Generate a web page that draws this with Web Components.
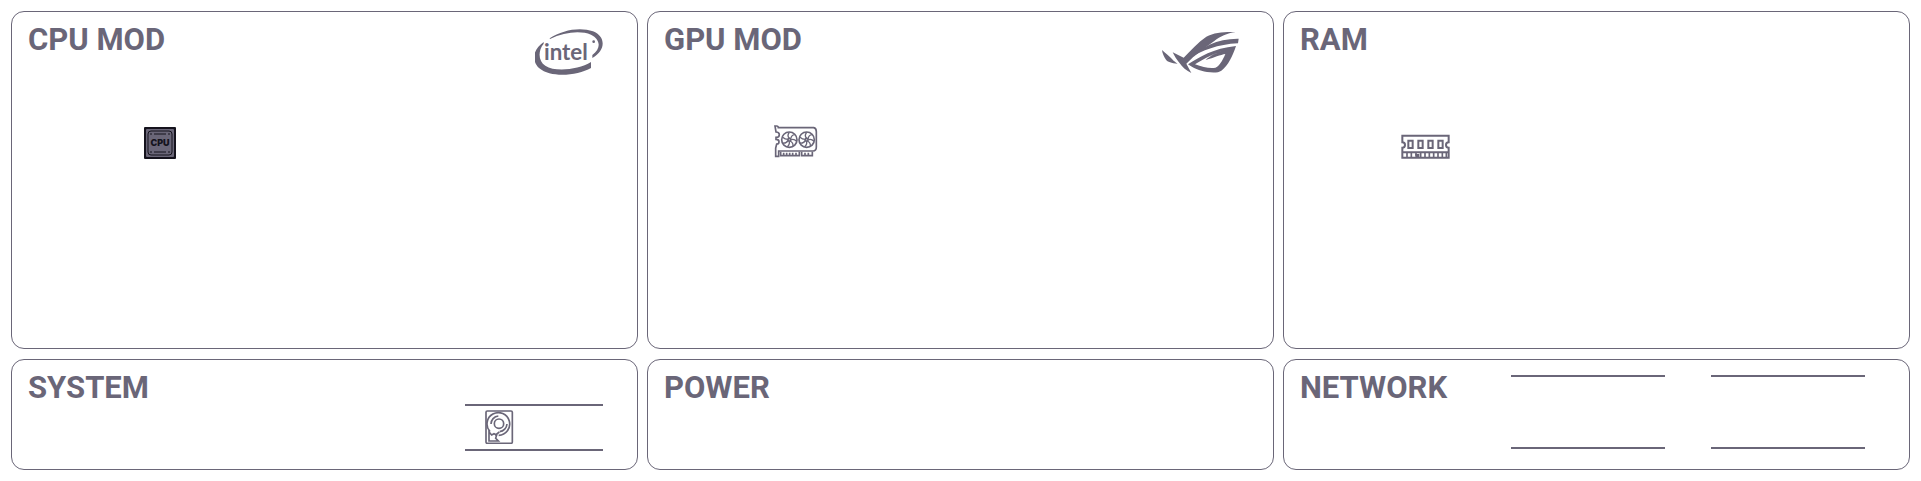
<!DOCTYPE html>
<html lang="en">
<head>
<meta charset="utf-8">
<title>Hardware monitor</title>
<style>
  html { --ink: #6a6678; background: #fff; }
  body { margin: 0; color: var(--ink); font-family: Roboto, "Open Sans", sans-serif; }
</style>
</head>
<body>
<hardware-dashboard></hardware-dashboard>
<script>
const define = (name, markup) => {
  const template = document.createElement('template');
  template.innerHTML = markup;
  customElements.define(name, class extends HTMLElement {
    constructor() {
      super();
      this.attachShadow({ mode: 'open' }).append(template.content.cloneNode(true));
    }
  });
};

define('stat-card', `
<style>
  :host { display: block; box-sizing: border-box; border: 1px solid var(--ink); border-radius: 13px; padding: 10px 34px 0 16px; }
  header { display: flex; justify-content: space-between; min-height: 54px; }
  h2 { margin: 0; font-size: 31px; line-height: 36px; font-weight: 700; white-space: nowrap; }
  .mark { padding-top: 7px; }
  .body { width: 264px; max-width: 100%; padding-top: 49px; display: flex; justify-content: center; }
</style>
<header><h2><slot></slot></h2><div class="mark"><slot name="mark"></slot></div></header>
<div class="body"><slot name="icon"></slot></div>`);

define('strip-card', `
<style>
  :host { display: flex; justify-content: space-between; box-sizing: border-box; border: 1px solid var(--ink); border-radius: 13px; padding: 10px 34px 0 16px; }
  h2 { margin: 0; font-size: 31px; line-height: 36px; font-weight: 700; white-space: nowrap; }
</style>
<h2><slot></slot></h2><slot name="readout"></slot>`);

define('drive-readout', `
<style>
  :host { display: block; box-sizing: border-box; width: 138px; height: 47px; margin-top: 34px; padding: 4px 20px 0; border: solid var(--ink); border-width: 2px 0; }
</style><slot></slot>`);

define('network-readout', `
<style>
  :host { display: flex; gap: 46px; margin: 5px 10px 0 0; }
  div { box-sizing: border-box; width: 154px; height: 74px; border: solid var(--ink); border-width: 2px 0; }
</style><div></div><div></div>`);

define('intel-mark', `
<style>:host, svg { display: block; }</style>
<svg width="68" height="46" viewBox="30 27 204 138" fill="currentColor" role="img" aria-label="Intel">
  <path d="M74 55C112 29 167 20 204 34C243 49 243 92 202 114L202 105C230 85 226 58 198 44C167 31 117 36 75 57Z"/>
  <path d="M56 66C24 88 18 121 43 145C77 174 156 168 198 144L198 126C160 149 91 157 61 137C40 124 38 93 56 71Z"/>
  <text x="57" y="119" font-family="Lato, sans-serif" font-size="67" font-weight="700">intel</text>
  <circle cx="206" cy="65" r="4"/>
</svg>`);

define('rog-mark', `
<style>:host, svg { display: block; }</style>
<svg width="77" height="46" viewBox="38 28 231 138" fill="currentColor" role="img" aria-label="Republic of Gamers">
  <path d="M38 91C49 101 61 110 68 118C73 124 79 128 85 132C67 130 54 126 50 120C44 112 39 101 38 91Z"/>
  <path d="M70 98L103 114C126 91 146 68 171 51C195 38 226 36 259 37C232 41 213 50 195 64C166 86 137 105 111 132L126 160C112 153 98 142 90 129C81 119 75 108 70 98Z"/>
  <path d="M119 117C155 82 205 56 268 57L266 71C205 74 159 92 119 117Z"/>
  <path fill-rule="evenodd" d="M116 134C151 112 191 86 260 79C250 108 237 138 216 153C207 160 188 159 173 157C151 154 130 145 116 134ZM137 134C157 142 176 146 193 145C208 145 220 122 228 103C214 105 194 114 169 121C181 109 202 99 221 94C194 101 164 117 137 134Z"/>
</svg>`);

define('cpu-icon', `
<style>:host, svg { display: block; }</style>
<svg width="32" height="34" viewBox="0 -2 32 34" role="img" aria-label="Processor">
  <rect width="32" height="32" rx="1" fill="#15131d"/>
  <rect x="2" y="2" width="28" height="28" rx="1" fill="#6a6678"/>
  <rect x="4" y="4" width="24" height="24" rx="3" fill="#6a6678" stroke="#15131d" stroke-width="1"/>
  <path d="M6 7h2M10 7h12M24 7h2M6 25h2M10 25h12M24 25h2" stroke="#15131d" stroke-width="1"/>
  <text x="16" y="19" text-anchor="middle" font-family="Inter, sans-serif" font-size="9" font-weight="900" fill="#15131d">CPU</text>
</svg>`);

define('gpu-icon', `
<style>:host, svg { display: block; }</style>
<svg width="44" height="34" viewBox="28 30 132 102" fill="none" stroke="currentColor" stroke-width="5" role="img" aria-label="Graphics card">
  <path d="M31 33h5q5 0 5 5h106q8 2 8 12v46q0 12-10 12H42v16h-9v-25l3-12q7 0 7-7t-9-7V67q10 0 10-8t-10-8z"/>
  <path d="M48 110v12h56v-12M111 110v12h32v-12M57 113v8M66 113v8M75 113v8M84 113v8M94 113v8M121 113v8M131 113v8"/>
  <g id="fan"><circle cx="74" cy="74" r="23"/><circle cx="74" cy="74" r="4"/><path stroke-width="4" d="M74 70q-8-8 0-18M78 72q2-12 12-13M78 75q9-5 18 4M76 78q10 4 9 15M73 78q4 9-5 17M70 76q-5 10-16 8M70 73q-9 0-17-7"/></g>
  <use href="#fan" x="52"/>
</svg>`);

define('ram-icon', `
<style>:host, svg { display: block; } svg { margin-right: 14px; }</style>
<svg width="49" height="34" viewBox="32 15 147 102" fill="none" stroke="currentColor" stroke-width="6" role="img" aria-label="Memory">
  <path d="M36 47h139v20q-8 0-8 8t8 8v30H84v-8h-6v8H36V83q8 0 8-8t-8-8zM37 97h137"/>
  <path d="M54 62h13v22H54zM84 62h13v22H84zM114 62h13v22h-13zM144 62h13v22h-13z"/>
  <path stroke-width="5" d="M50 98v13M63 98v13M77 98v9M91 98v13M104 98v13M117 98v13M130 98v13M143 98v13M156 98v13M168 98v13"/>
</svg>`);

define('drive-icon', `
<style>:host, svg { display: block; }</style>
<svg width="29" height="34" viewBox="90 60 87 102" fill="none" stroke="currentColor" stroke-width="5" role="img" aria-label="Disk drive">
  <rect x="93" y="63" width="79" height="97" rx="4"/>
  <path d="M105 125A34 34 0 1 1 131 136M108 102A24 24 0 0 1 130 78M156 102A25 25 0 0 1 134 125"/>
  <circle cx="132" cy="101" r="14"/>
  <path d="M102 126v27h28l-8-8 3-10-8-4-7 4zM120 136l13-10"/>
</svg>`);

define('hardware-dashboard', `
<style>
  :host { display: grid; box-sizing: border-box; padding: 11px; column-gap: 9px; row-gap: 10px; grid-template-columns: repeat(3, minmax(0, 1fr)); grid-template-rows: minmax(338px, auto) minmax(111px, auto); }
</style>
<stat-card>CPU MOD<intel-mark slot="mark"></intel-mark><cpu-icon slot="icon"></cpu-icon></stat-card>
<stat-card>GPU MOD<rog-mark slot="mark"></rog-mark><gpu-icon slot="icon"></gpu-icon></stat-card>
<stat-card>RAM<ram-icon slot="icon"></ram-icon></stat-card>
<strip-card>SYSTEM<drive-readout slot="readout"><drive-icon></drive-icon></drive-readout></strip-card>
<strip-card>POWER</strip-card>
<strip-card>NETWORK<network-readout slot="readout"></network-readout></strip-card>`);
</script>
</body>
</html>
